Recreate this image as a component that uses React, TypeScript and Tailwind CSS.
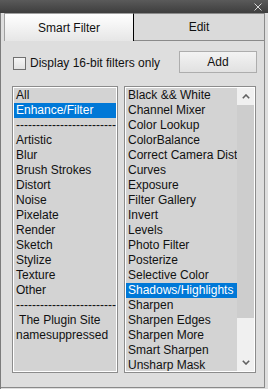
import React from "react";

const categories = [
  "All",
  "Enhance/Filter",
  "-------------------------",
  "Artistic",
  "Blur",
  "Brush Strokes",
  "Distort",
  "Noise",
  "Pixelate",
  "Render",
  "Sketch",
  "Stylize",
  "Texture",
  "Other",
  "-------------------------",
  " The Plugin Site",
  "namesuppressed",
];

const filters = [
  "Black && White",
  "Channel Mixer",
  "Color Lookup",
  "ColorBalance",
  "Correct Camera Dist",
  "Curves",
  "Exposure",
  "Filter Gallery",
  "Invert",
  "Levels",
  "Photo Filter",
  "Posterize",
  "Selective Color",
  "Shadows/Highlights",
  "Sharpen",
  "Sharpen Edges",
  "Sharpen More",
  "Smart Sharpen",
  "Unsharp Mask",
];

function Row({ label, selected }: { label: string; selected?: boolean }) {
  return (
    <div
      className={`h-[15px] pl-[2px] leading-[15px] whitespace-pre overflow-hidden ${
        selected ? "bg-[#0078d7] text-white" : "text-[#111]"
      }`}
    >
      {label}
    </div>
  );
}

export default function App() {
  return (
    <div
      className="w-[268px] h-[389px] flex flex-col bg-[#dedede] text-[12px] overflow-hidden"
      style={{ fontFamily: '"Liberation Sans", Arial, sans-serif' }}
    >
      {/* Title bar */}
      <div className="h-[13px] flex justify-end items-center pr-[6px] bg-gradient-to-b from-[#5a5a5a] to-[#3e3e3e]">
        <svg width="8" height="8" viewBox="0 0 8 8" className="text-[#d6d6d6]">
          <path d="M0.5 0.5 L7.5 7.5 M7.5 0.5 L0.5 7.5" stroke="currentColor" strokeWidth="1" />
        </svg>
      </div>

      {/* Body */}
      <div className="flex-1 flex flex-col border-l border-[#7c7c7c] pr-[3px] pb-[1px]">
        {/* Tabs */}
        <div className="h-[28px] flex pl-[3px]">
          <div className="w-[130px] flex items-center justify-center border-t border-l border-[#a0a0a0] border-r border-r-black bg-gradient-to-b from-white to-[#e6e6e6] text-[#111]">
            Smart Filter
          </div>
          <div className="flex-1 flex items-center justify-center border-t border-r border-b border-[#8a8a8a] bg-[#dadada] text-[#111]">
            Edit
          </div>
        </div>

        {/* Tab page */}
        <div className="flex-1 flex flex-col border-r border-b border-[#8a8a8a] pl-[11px] pr-[7px] pt-[10px]">
          <div className="h-[22px] flex items-center">
            <div className="w-[13px] h-[13px] mt-[2px] ml-[1px] border border-[#707070] bg-gradient-to-b from-[#f6f6f6] to-[#e2e2e2]" />
            <span className="ml-[4px] mt-[1px] text-[#111]">Display 16-bit filters only</span>
            <button className="ml-auto w-[78px] h-[22px] border border-[#adadad] bg-gradient-to-b from-[#f3f3f3] to-[#e1e1e1] text-[#111]">
              Add
            </button>
          </div>

          <div className="mt-[13px] h-[287px] flex gap-[6px]">
            {/* Categories */}
            <div className="w-[106px] border border-[#8c8c8c] shadow-[inset_0_0_0_1px_#ffffff] bg-[#d3d3d3] p-[1px] overflow-hidden">
              {categories.map((c, i) => (
                <Row key={i} label={c} selected={i === 1} />
              ))}
            </div>

            {/* Filters */}
            <div className="w-[132px] flex border border-[#8c8c8c] shadow-[inset_0_0_0_1px_#ffffff] bg-[#d3d3d3] p-[1px]">
              <div className="w-[111px] overflow-hidden">
                {filters.map((f, i) => (
                  <Row key={i} label={f} selected={i === 13} />
                ))}
              </div>
              <div className="w-[17px] flex flex-col bg-[#f0f0f0]">
                <div className="h-[17px] flex items-center justify-center">
                  <svg width="8" height="5" viewBox="0 0 8 5">
                    <path d="M0.8 4.2 L4 1 L7.2 4.2" fill="none" stroke="#606060" strokeWidth="1.6" />
                  </svg>
                </div>
                <div className="h-[213px] bg-[#cdcdcd]" />
                <div className="flex-1 flex items-end justify-center pb-[6px]">
                  <svg width="8" height="5" viewBox="0 0 8 5">
                    <path d="M0.8 0.8 L4 4 L7.2 0.8" fill="none" stroke="#606060" strokeWidth="1.6" />
                  </svg>
                </div>
              </div>
            </div>
          </div>
        </div>
      </div>
    </div>
  );
}
